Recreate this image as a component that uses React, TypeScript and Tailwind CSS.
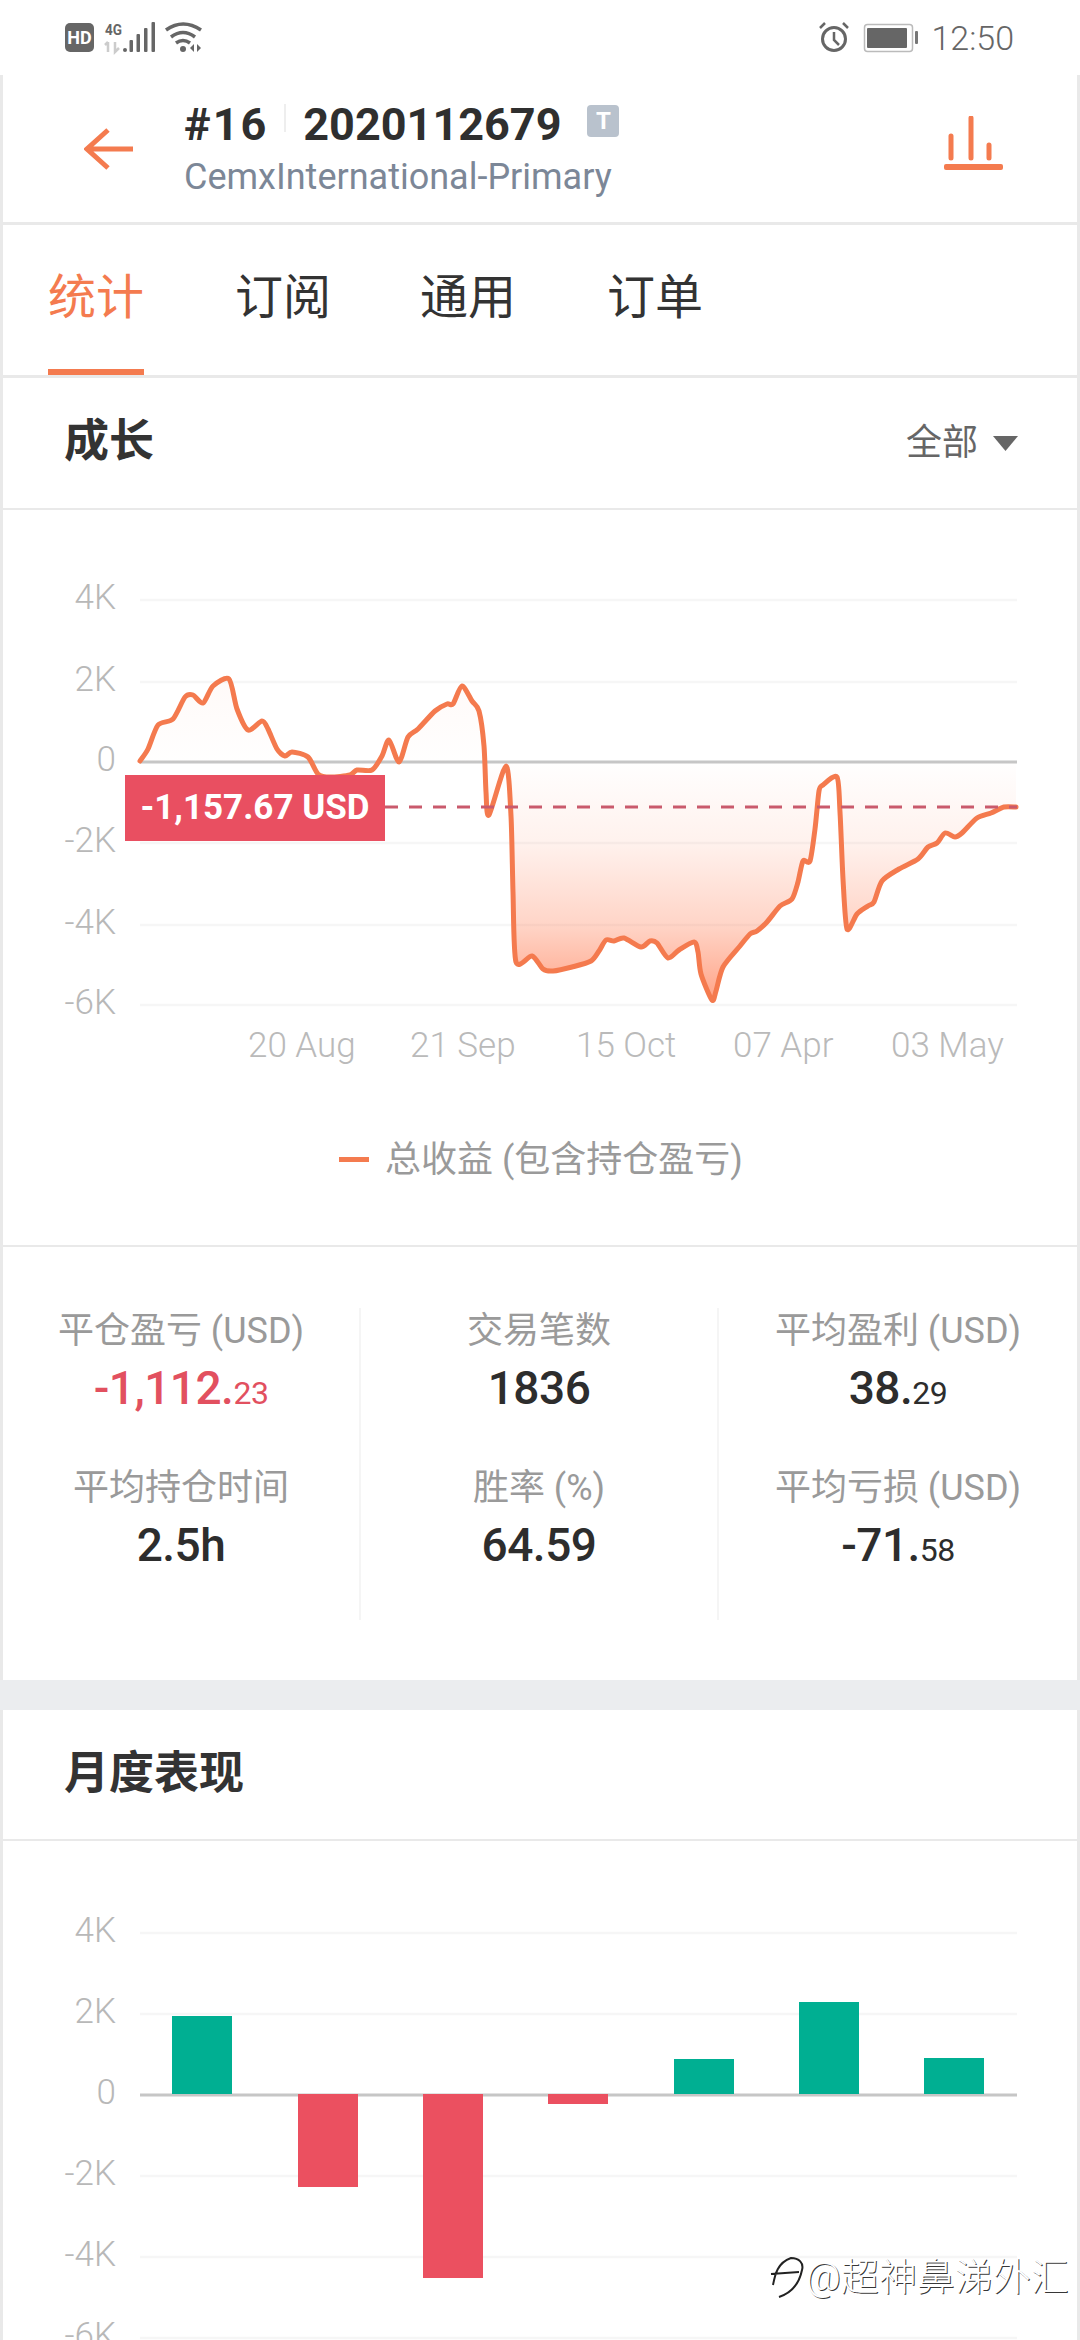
const linePts: [number, number][] = [
  [140,762],[148,750],[158,726],[173,720],[185,698],[193,696],[203,704],[213,687],[229,680],[237,710],[248,731],[262,722],[268,730],[277,750],[285,757],[292,753],[308,758],[318,775],[330,778],[350,776],[357,771],[372,771],[382,757],[389,741],[399,763],[408,738],[418,730],[435,712],[447,705],[453,705],[462,687],[472,702],[479,712],[484,747],[486,793],[489,816],[506,767],[511,817],[513,893],[516,963],[532,957],[543,970],[553,972],[572,968],[591,962],[599,952],[606,941],[614,942],[624,939],[641,948],[650,942],[657,944],[668,959],[679,951],[694,943],[698,953],[701,975],[712,1001],[716,992],[723,968],[740,947],[750,935],[757,932],[767,923],[780,907],[792,900],[798,883],[803,862],[810,862],[815,830],[819,792],[823,786],[837,778],[840,813],[843,880],[847,930],[857,915],[868,907],[874,903],[882,882],[899,870],[918,860],[928,848],[937,844],[945,834],[955,838],[962,834],[977,819],[991,814],[1004,808],[1016,808],
];

function smooth(p: [number, number][]) {
  const k = 0.13;
  let d = `M${p[0][0]} ${p[0][1]}`;
  for (let i = 0; i < p.length - 1; i++) {
    const a = p[Math.max(0, i - 1)], b = p[i], c = p[i + 1], e = p[Math.min(p.length - 1, i + 2)];
    d += ` C${(b[0] + (c[0] - a[0]) * k).toFixed(1)} ${(b[1] + (c[1] - a[1]) * k).toFixed(1)} ${(c[0] - (e[0] - b[0]) * k).toFixed(1)} ${(c[1] - (e[1] - b[1]) * k).toFixed(1)} ${c[0]} ${c[1]}`;
  }
  return d;
}

const lineD = smooth(linePts);

function Grid({ rows, x2 = 1017 }: { rows: { y: number; label: string }[]; x2?: number }) {
  return (
    <>
      {rows.map((r) => (
        <g key={r.label}>
          <line x1={140} x2={x2} y1={r.y} y2={r.y} stroke={r.label === "0" ? "#c6c6c6" : "#f6f6f6"} strokeWidth={r.label === "0" ? 3 : 2.5} />
          <text x={116} y={r.y + 9} textAnchor="end" fontSize={35} fontWeight={300} fill="#b8b8b8">{r.label}</text>
        </g>
      ))}
    </>
  );
}

function StatusBar() {
  return (
    <div className="h-[75px] bg-white flex items-center justify-between pl-[63px] pr-[66px]">
      <svg width="145" height="40" viewBox="63 18 145 40" className="block">
        <rect x="65" y="23" width="29" height="29" rx="5" fill="#666" />
        <text x="79.5" y="43.5" textAnchor="middle" fontSize="18" fontWeight="700" fill="#fff">HD</text>
        <text x="105" y="35" fontSize="15" fontWeight="700" fill="#666" textLength="17" lengthAdjust="spacingAndGlyphs">4G</text>
        <path d="M108 42v10M105 45l3-3M115 42v10l4-4" fill="none" stroke="#ccc" strokeWidth="2.5" />
        <circle cx="125" cy="50" r="2" fill="#666" />
        <g fill="#666">
          <rect x="129.500" y="40" width="3.500" height="12" rx="1" />
          <rect x="136.500" y="34" width="3.500" height="18" rx="1" />
          <rect x="144" y="28" width="3.500" height="24" rx="1" />
          <rect x="151.500" y="22" width="3.500" height="30" rx="1" />
        </g>
        <path d="M166 30Q183 18 201 30M171 37Q183 28 195 37M176 43Q183 38 190 43" fill="none" stroke="#666" strokeWidth="3.500" />
        <circle cx="183" cy="49" r="3" fill="#666" />
        <path d="M190 48l4-4v8zM197 44l4 4-4 4z" fill="#666" />
      </svg>
      <div className="flex items-center">
        <svg width="100" height="40" viewBox="820 18 100 40" className="block mr-[12px]">
          <circle cx="835" cy="39" r="11.500" fill="none" stroke="#666" strokeWidth="3" />
          <path d="M835 32v8l5 5" fill="none" stroke="#666" strokeWidth="2.500" />
          <path d="M821 28l5-5M849 28l-5-5" stroke="#666" strokeWidth="2.500" />
          <rect x="865.500" y="24.500" width="48" height="27" rx="3" fill="none" stroke="#bbb" strokeWidth="1.500" />
          <rect x="868" y="28" width="40" height="20" rx="1" fill="#666" />
          <rect x="916" y="31" width="3" height="13" rx="1" fill="#777" />
        </svg>
        <span className="text-[34px] leading-[40px] font-light text-[#666]">12:50</span>
      </div>
    </div>
  );
}

function Header() {
  return (
    <div className="h-[147px] bg-white flex items-center mb-[3px]">
      <svg width="52" height="44" viewBox="83 127 52 44" className="block ml-[81px] shrink-0">
        <path d="M132 149H88M107 130L86 149L107 168" fill="none" stroke="#f47b4f" strokeWidth="5" />
      </svg>
      <div className="ml-[48px] flex flex-col">
        <div className="flex items-center h-[44px] mt-[4px]">
          <span className="text-[45px] leading-[44px] font-bold text-[#2f2f2f] tracking-[2px]">#16</span>
          <span className="w-[2px] h-[28px] -mt-[14px] bg-[#eeeeee] ml-[16px] mr-[17px]"></span>
          <span className="text-[45px] leading-[44px] font-bold text-[#2f2f2f]">2020112679</span>
          <span className="w-[32px] h-[32px] -mt-[8px] ml-[26px] rounded-[4px] bg-[#b9c2cd] text-white text-[24px] leading-[32px] font-bold text-center">T</span>
        </div>
        <div className="text-[36px] leading-[44px] mt-[8px] text-[#7c8797]">CemxInternational-Primary</div>
      </div>
      <svg width="62" height="56" viewBox="942 116 62 56" className="block ml-auto mr-[72px] -mt-[9px] shrink-0">
        <path d="M950 136v22M970 118v40M988 145v13" stroke="#f47b4f" strokeWidth="5" strokeLinecap="round" fill="none" />
        <rect x="943" y="164" width="59" height="6" rx="2" fill="#f47b4f" />
      </svg>
    </div>
  );
}

function Tabs() {
  return (
    <div className="h-[150px] bg-white flex mb-[3px] pl-[45px] text-[48px] leading-[146px] text-[#333]">
      <div className="w-[96px] h-[150px] border-b-[6px] border-[#f47b4f] text-[#f47b4f] text-center">统计</div>
      <div className="ml-[91px]">订阅</div>
      <div className="ml-[89px]">通用</div>
      <div className="ml-[91px]">订单</div>
    </div>
  );
}

function GrowthChart() {
  return (
    <div className="relative h-[735px] bg-white mb-[2px]">
      <svg width="1074" height="735" viewBox="3 511 1074 735" className="block">
        <defs>
          <linearGradient id="area" gradientUnits="userSpaceOnUse" x1="0" y1="680" x2="0" y2="1000">
            <stop offset="0" stopColor="#ff7a50" stopOpacity="0.04" />
            <stop offset="0.26" stopColor="#ff7a50" stopOpacity="0.005" />
            <stop offset="0.51" stopColor="#ff7a50" stopOpacity="0.1" />
            <stop offset="0.77" stopColor="#ff7a50" stopOpacity="0.32" />
            <stop offset="1" stopColor="#ff7a50" stopOpacity="0.68" />
          </linearGradient>
        </defs>
        <Grid rows={[{ y: 601, label: "4K" }, { y: 683, label: "2K" }, { y: 844, label: "-2K" }, { y: 926, label: "-4K" }, { y: 1006, label: "-6K" }, { y: 763, label: "0" }]} />
        <path d={`${lineD} L1016 763 L140 763 Z`} fill="url(#area)" />
        <path d={lineD} fill="none" stroke="#f47a4e" strokeWidth="5" strokeLinejoin="round" strokeLinecap="round" />
        <line x1="385" x2="1017" y1="808" y2="808" stroke="#c95a6c" strokeWidth="3" strokeDasharray="13 11" />
        {[["20 Aug", 248], ["21 Sep", 410], ["15 Oct", 576], ["07 Apr", 733], ["03 May", 891]].map(([t, x]) => (
          <text key={t as string} x={x as number} y={1058} fontSize={35} fontWeight={300} fill="#bababa">{t}</text>
        ))}
        <rect x="339" y="1158" width="30" height="5" fill="#f47b4f" />
        <text x="385" y="1173" fontSize={36} fill="#9a9a9a">总收益 (包含持仓盈亏)</text>
      </svg>
      <div className="absolute left-[122px] top-[265px] w-[260px] h-[66px] bg-[#e94f61] text-white text-[35px] leading-[66px] font-bold text-center">-1,157.67 USD</div>
    </div>
  );
}

function Stat({ label, value, small, red }: { label: string; value: string; small?: string; red?: boolean }) {
  return (
    <div className="h-[110px] flex flex-col items-center">
      <div className="h-[46px] text-[36px] leading-[46px] text-[#9a9a9a]">{label}</div>
      <div className={`h-[60px] mt-[4px] text-[46px] leading-[60px] font-medium tracking-[-0.5px] ${red ? "text-[#e2505f]" : "text-[#2d2d2d]"}`}>
        {value}
        {small && <span className="text-[32px] font-normal">{small}</span>}
      </div>
    </div>
  );
}

function Stats() {
  return (
    <div className="h-[433px] bg-white pt-[61px]">
      <div className="grid grid-cols-[358px_358px_358px] h-[312px]">
        <div className="border-r-[2px] border-[#f5f5f5] flex flex-col gap-[47px]">
          <Stat label="平仓盈亏 (USD)" value="-1,112." small="23" red />
          <Stat label="平均持仓时间" value="2.5h" />
        </div>
        <div className="border-r-[2px] border-[#f5f5f5] flex flex-col gap-[47px]">
          <Stat label="交易笔数" value="1836" />
          <Stat label="胜率 (%)" value="64.59" />
        </div>
        <div className="flex flex-col gap-[47px]">
          <Stat label="平均盈利 (USD)" value="38." small="29" />
          <Stat label="平均亏损 (USD)" value="-71." small="58" />
        </div>
      </div>
    </div>
  );
}

function SectionTitle({ title, right, tall }: { title: string; right?: boolean; tall?: boolean }) {
  return (
    <div className={`${tall ? "h-[130px]" : "h-[129px]"} bg-white flex items-center pl-[61px] pr-[59px] mb-[2px]`}>
      <span className="text-[45px] font-bold text-[#333] -mt-[2px]">{title}</span>
      {right && (
        <div className="ml-auto flex items-center">
          <span className="text-[36px] text-[#666]">全部</span>
          <svg width="25" height="15" viewBox="0 0 25 15" className="block ml-[15px]"><path d="M0 0H25L12.500 15Z" fill="#666" /></svg>
        </div>
      )}
    </div>
  );
}

const bars = [
  { x: 172, y1: 2016, y2: 2094, c: "#00af92" },
  { x: 298, y1: 2094, y2: 2187, c: "#eb5060" },
  { x: 423, y1: 2094, y2: 2278, c: "#eb5060" },
  { x: 548, y1: 2094, y2: 2104, c: "#eb5060" },
  { x: 674, y1: 2059, y2: 2094, c: "#00af92" },
  { x: 799, y1: 2002, y2: 2094, c: "#00af92" },
  { x: 924, y1: 2058, y2: 2094, c: "#00af92" },
];

function MonthlyChart() {
  return (
    <div className="relative h-[499px] bg-white overflow-hidden">
      <svg width="1074" height="499" viewBox="3 1841 1074 499" className="block">
        <Grid rows={[{ y: 1933, label: "4K" }, { y: 2014, label: "2K" }, { y: 2095, label: "0" }, { y: 2176, label: "-2K" }, { y: 2257, label: "-4K" }, { y: 2338, label: "-6K" }]} />
        {bars.map((b) => <rect key={b.x} x={b.x} y={b.y1} width="60" height={b.y2 - b.y1} fill={b.c} />)}
      </svg>
      <div className="absolute left-[766px] top-[411px] flex items-center h-[50px]">
        <svg width="36" height="44" viewBox="770 2260 36 44" className="block">
          <path d="M772 2279L800 2277M774 2290C776 2280 778 2268 792 2263C800 2263 805 2268 803 2275C800 2290 792 2298 780 2302" fill="none" stroke="#222" strokeWidth="2" />
        </svg>
        <span className="ml-[1px] text-[38px] leading-[50px] font-light text-white [text-shadow:1px_1px_0_rgba(0,0,0,0.8)]">@超神鼻涕外汇</span>
      </div>
    </div>
  );
}

export default function App() {
  return (
    <div className="w-[1080px] h-[2340px] overflow-hidden bg-white font-[family-name:Roboto,'Noto_Sans_CJK_SC',sans-serif]">
      <StatusBar />
      <div className="px-[3px] bg-[#e9e9e9] h-[2265px]">
        <Header />
        <Tabs />
        <SectionTitle title="成长" right tall />
        <GrowthChart />
        <Stats />
        <div className="h-[30px] bg-[#ebedef] -mx-[3px]"></div>
        <SectionTitle title="月度表现" />
        <MonthlyChart />
      </div>
    </div>
  );
}
